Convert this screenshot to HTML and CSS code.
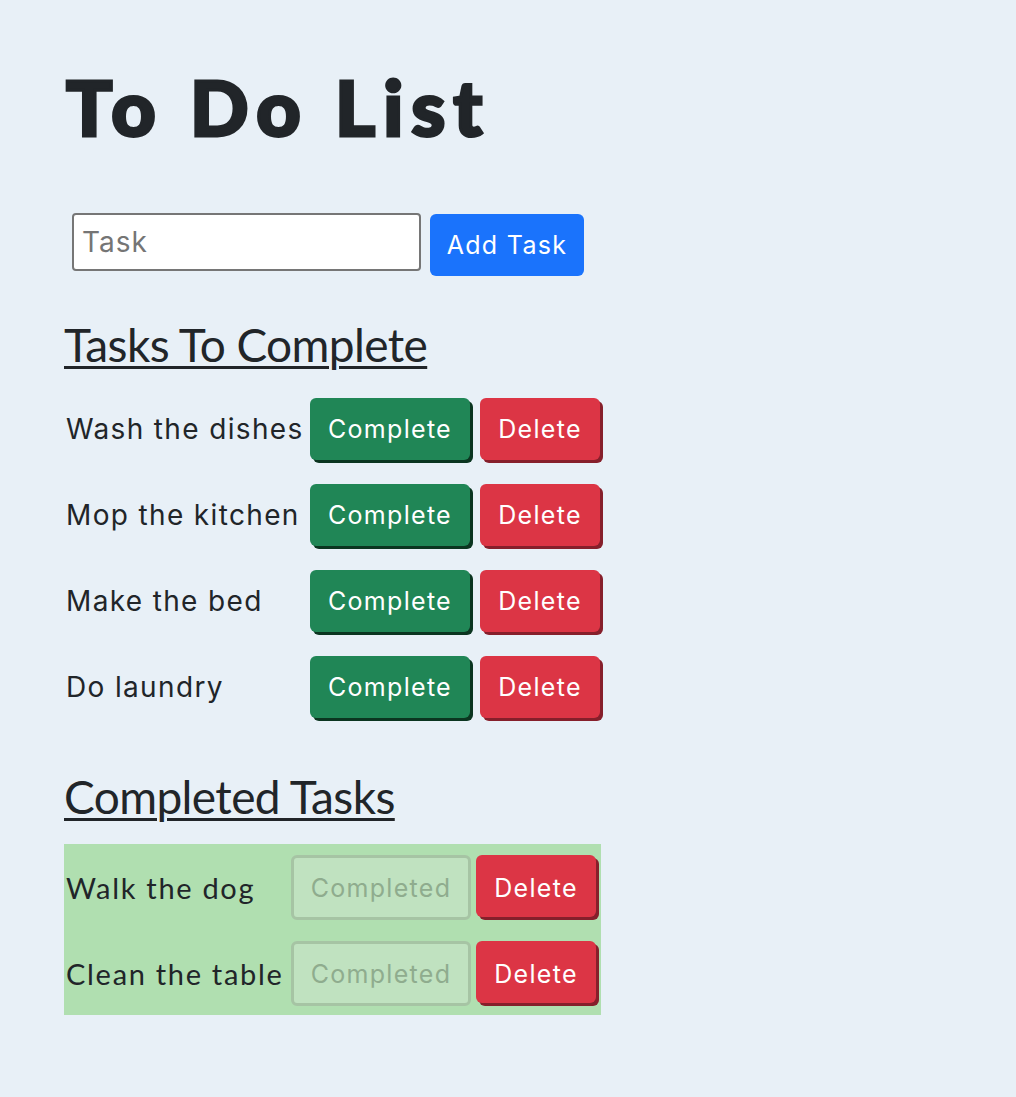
FILE: index.html
```html
<!DOCTYPE html>
<html lang="en">
<head>
<meta charset="utf-8">
<title>To Do List</title>
<link rel="stylesheet" href="styles.css">
</head>
<body>
<main class="app">
  <h1 class="title">To Do List</h1>
  <form class="add-form">
    <input class="task-input" type="text" placeholder="Task">
    <button class="btn btn-primary" type="button">Add Task</button>
  </form>

  <h2 class="section-title">Tasks To Complete</h2>
  <ul class="task-list todo">
    <li class="task"><span class="task-name">Wash the dishes</span><button class="btn btn-success" type="button">Complete</button><button class="btn btn-danger" type="button">Delete</button></li>
    <li class="task"><span class="task-name">Mop the kitchen</span><button class="btn btn-success" type="button">Complete</button><button class="btn btn-danger" type="button">Delete</button></li>
    <li class="task"><span class="task-name">Make the bed</span><button class="btn btn-success" type="button">Complete</button><button class="btn btn-danger" type="button">Delete</button></li>
    <li class="task"><span class="task-name">Do laundry</span><button class="btn btn-success" type="button">Complete</button><button class="btn btn-danger" type="button">Delete</button></li>
  </ul>

  <h2 class="section-title done-title">Completed Tasks</h2>
  <ul class="task-list done">
    <li class="task"><span class="task-name">Walk the dog</span><button class="btn btn-completed" type="button" disabled>Completed</button><button class="btn btn-danger" type="button">Delete</button></li>
    <li class="task"><span class="task-name">Clean the table</span><button class="btn btn-completed" type="button" disabled>Completed</button><button class="btn btn-danger" type="button">Delete</button></li>
  </ul>
</main>
</body>
</html>
```

FILE: styles.css
```css
html, body {
  margin: 0;
  padding: 0;
}

body {
  background: #e8f0f7;
  color: #212529;
  font-family: Inter, "Liberation Sans", sans-serif;
  min-height: 1097px;
}

.app {
  padding: 58px 64px 0 64px;
}

.title {
  margin: 0;
  padding-left: 2px;
  font-family: Lato, "Liberation Sans", sans-serif;
  font-weight: 900;
  font-size: 77px;
  line-height: 96px;
  letter-spacing: 8px;
  -webkit-text-stroke: 3px #212529;
}

.add-form {
  display: flex;
  align-items: flex-start;
  gap: 9px;
  margin: 59px 0 0 8px;
}

.task-input {
  box-sizing: border-box;
  width: 349px;
  height: 58px;
  border: 2px solid #767676;
  border-radius: 4px;
  padding: 0 8px;
  font-family: Inter, "Liberation Sans", sans-serif;
  font-size: 28px;
  letter-spacing: 1px;
  color: #212529;
  background: #fff;
}

.task-input::placeholder {
  color: #757575;
}

.btn {
  box-sizing: border-box;
  height: 62px;
  border: none;
  border-radius: 6px;
  padding: 0;
  font-family: Inter, "Liberation Sans", sans-serif;
  font-size: 25px;
  letter-spacing: 1.3px;
  color: #fff;
  cursor: pointer;
}

.btn-primary {
  margin-top: 1px;
  width: 154px;
  background: #1a73fc;
}

.section-title {
  margin: 41px 0 0 0;
  font-family: Lato, "Liberation Sans", sans-serif;
  font-weight: 400;
  font-size: 46px;
  line-height: 56px;
  letter-spacing: -0.6px;
  text-decoration: underline;
  text-decoration-thickness: 3px;
  text-underline-offset: 4px;
}

.done-title {
  margin-top: 51px;
}

.task-list {
  list-style: none;
  margin: 0;
  padding: 0;
}

.todo {
  margin-top: 25px;
}

.task {
  display: flex;
  align-items: center;
}

.todo .task {
  height: 62px;
  margin-bottom: 24px;
}

.todo .task:last-child {
  margin-bottom: 0;
}

.task-name {
  font-size: 28px;
  letter-spacing: 1.35px;
  padding-left: 2px;
}

.todo .task-name {
  width: 244px;
}

.btn-success {
  width: 160px;
  background: #208656;
  box-shadow: 3px 3px 0 #0b3520;
}

.btn-danger {
  width: 120px;
  margin-left: 10px;
  background: #dc3545;
  box-shadow: 3px 3px 0 #861f2b;
}

.done {
  margin-top: 19px;
  width: 537px;
  background: #b0dfb0;
  padding: 11px 0 9px 0;
}

.done .task {
  height: 65px;
  margin-bottom: 21px;
}

.done .task:last-child {
  margin-bottom: 0;
}

.done .task-name {
  width: 225px;
  font-family: Lato, "Liberation Sans", sans-serif;
  font-size: 29px;
  letter-spacing: 1.7px;
}

.btn-completed {
  width: 180px;
  height: 65px;
  border: 3px solid #a6c4a4;
  background: #c0e2c0;
  color: #8fac8e;
  cursor: default;
}

.done .btn-danger {
  margin-left: 5px;
  height: 62px;
  padding-top: 3px;
  align-self: flex-start;
}
```
